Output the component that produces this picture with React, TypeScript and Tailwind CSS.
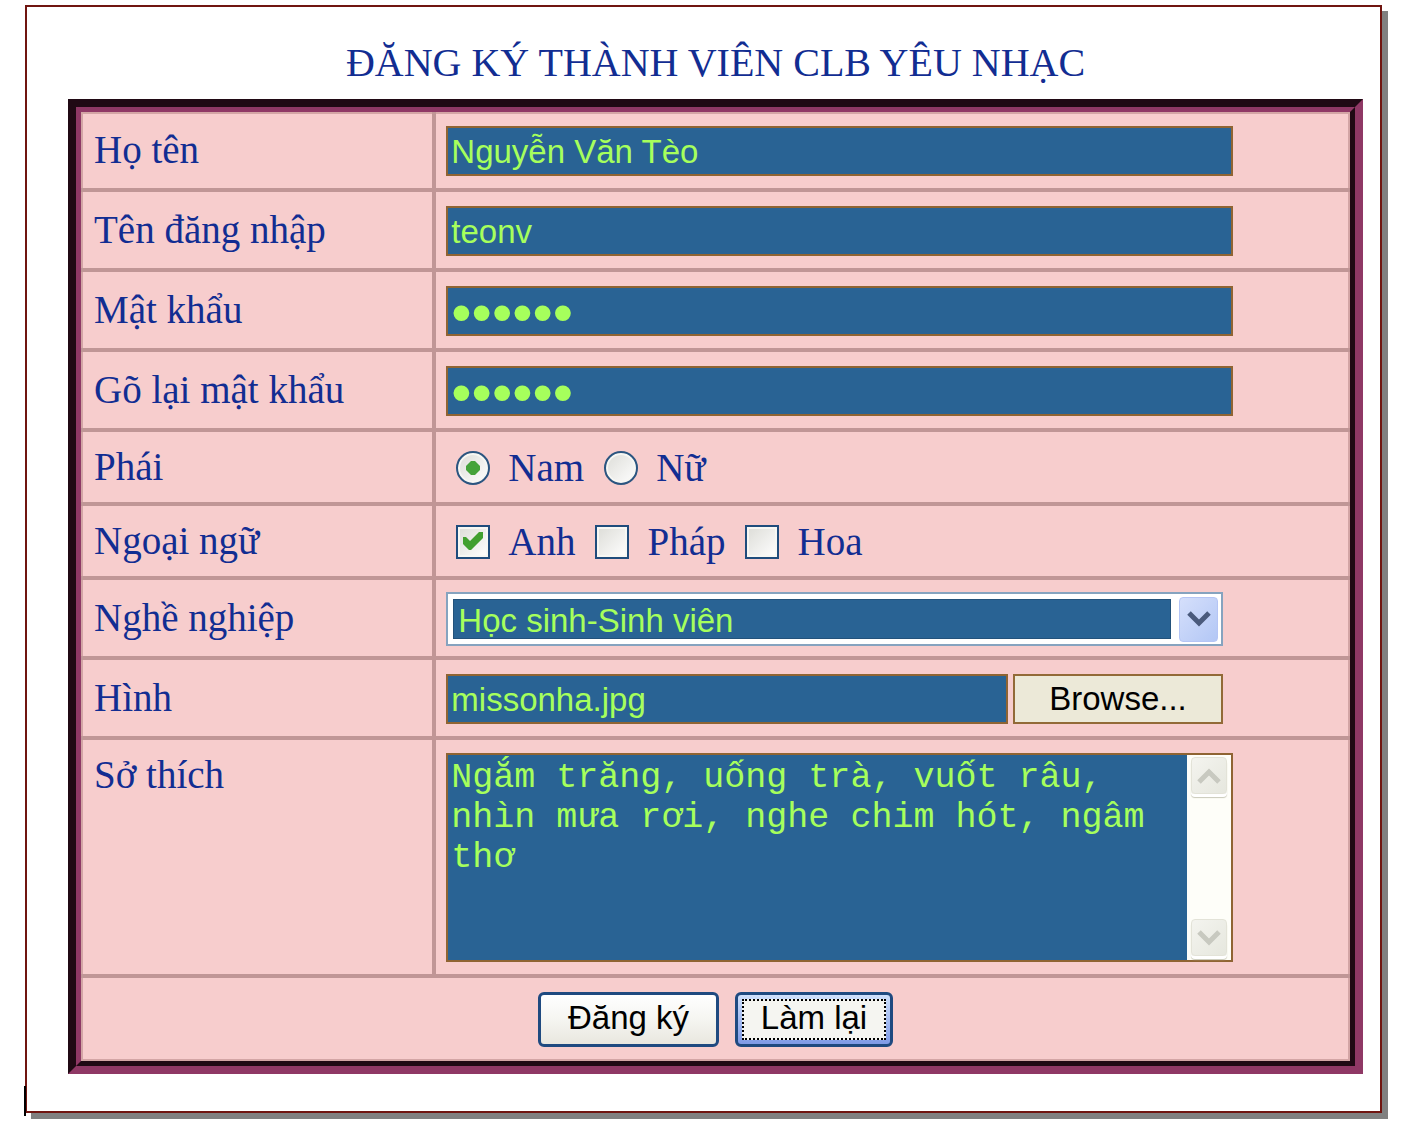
import type { InputHTMLAttributes, ReactNode } from "react";

const box = "block w-full h-[50px] border-2 border-[#8f6433] bg-[#296394] px-[3px] font-['Liberation_Sans',sans-serif] text-[#a6ff5c] outline-none";
const field = `${box} pt-[2px] text-[33px] leading-[44px]`;
const secret = `${box} text-[58px] leading-[46px]`;

function Row({ label, htmlFor, height, tight, children }: { label: string; htmlFor?: string; height: string; tight?: boolean; children: ReactNode }) {
  return (
    <tr className={height}>
      <th
        scope="row"
        className={`${tight ? "pt-[12px]" : "pt-[15px]"} border-r-4 border-b-4 border-[#c09696] pl-[13px] text-left align-top font-normal`}
      >
        {htmlFor ? (
          <label htmlFor={htmlFor} className="block leading-[46px]">
            {label}
          </label>
        ) : (
          <span className="block leading-[46px]">{label}</span>
        )}
      </th>
      <td className="border-b-4 border-[#c09696] py-0 pr-[117px] pl-[10px] align-top">{children}</td>
    </tr>
  );
}

function Choice({ label, ...props }: { label: string } & InputHTMLAttributes<HTMLInputElement>) {
  const round = props.type === "radio";
  return (
    <label className="flex items-center gap-[18px] leading-[46px]">
      <span className="relative block size-[34px]">
        <input
          {...props}
          className={
            round
              ? "peer block size-[34px] appearance-none rounded-full border-2 border-[#2b5580] bg-linear-to-br from-[#dcdcd7] to-white shadow-[inset_0_0_0_2px_#f7f7f3]"
              : "peer block size-[34px] appearance-none border-2 border-[#1f4c7c] bg-linear-to-br from-[#dcdcd7] to-white shadow-[inset_0_0_0_2px_#f7f7f3]"
          }
        />
        <svg viewBox="0 0 34 34" className="pointer-events-none invisible absolute inset-0 size-full peer-checked:visible" aria-hidden="true">
          {round ? (
            <path d="M15 10h4l5 5v4l-5 5h-4l-5-5v-4z" fill="#45a33a" />
          ) : (
            <path d="M7 12H10L14 16L23 7H27V13L15 25H13L7 19Z" fill="#41a02f" />
          )}
        </svg>
      </span>
      {label}
    </label>
  );
}

function Chevron({ up, color }: { up?: boolean; color: string }) {
  return (
    <svg viewBox="0 0 24 16" className="h-4 w-6" fill="none" stroke={color} strokeWidth="5" aria-hidden="true">
      <path d={up ? "M2 14L12 4L22 14" : "M2 2L12 12L22 2"} />
    </svg>
  );
}

const scrollButton =
  "flex h-[37px] w-[36px] items-center justify-center rounded-[4px] border border-[#e3e3d8] bg-linear-to-br from-[#f4f4ef] to-[#e6e7de] shadow-[0_3px_0_#fff,0_4px_1px_#c9c9b8]";
const command =
  "flex h-[55px] items-center justify-center rounded-[6px] border-[3px] border-[#1f4a80] text-[33px] font-['Liberation_Sans',sans-serif] text-black";

export default function App() {
  return (
    <main className="min-h-screen bg-white pt-[5px] pr-[22px] pb-[25px] pl-[25px] font-['Liberation_Serif',serif] text-[39px] text-[#122d92]">
      <form
        className="relative border-2 border-[#701510] bg-white pt-[33px] pr-[17px] pb-[37px] pl-[41px] shadow-[6px_6px_0_#808080]"
        onSubmit={(e) => e.preventDefault()}
      >
        <span className="absolute -bottom-[5px] -left-[3px] h-[30px] w-[2px] bg-black" aria-hidden="true" />
        <h1 className="pb-[13px] text-center text-[40px] leading-[46px]">ĐĂNG KÝ THÀNH VIÊN CLB YÊU NHẠC</h1>

        <div className="border-8 border-t-[#200914] border-r-[#8f3865] border-b-[#8f3865] border-l-[#200914]">
          <div className="border-[5px] border-t-[#8f3865] border-r-[#200914] border-b-[#200914] border-l-[#8f3865] bg-[#f7cdcd]">
            <table className="w-full table-fixed border-separate border-spacing-0 shadow-[inset_0_0_0_2px_#d3a5a5]">
              <colgroup>
                <col className="w-[28%]" />
                <col />
              </colgroup>
              <tbody>
                <Row label="Họ tên" htmlFor="name" height="h-20">
                  <input id="name" className={`${field} mt-[14px]`} defaultValue="Nguyễn Văn Tèo" />
                </Row>
                <Row label="Tên đăng nhập" htmlFor="user" height="h-20">
                  <input id="user" className={`${field} mt-[14px]`} defaultValue="teonv" />
                </Row>
                <Row label="Mật khẩu" htmlFor="pass" height="h-20">
                  <input id="pass" type="password" className={`${secret} mt-[14px]`} defaultValue="teo123" />
                </Row>
                <Row label="Gõ lại mật khẩu" htmlFor="pass2" height="h-20">
                  <input id="pass2" type="password" className={`${secret} mt-[14px]`} defaultValue="teo123" />
                </Row>
                <Row label="Phái" height="h-[74px]" tight>
                  <div className="flex gap-5 pt-[13px] pl-[10px]">
                    <Choice type="radio" name="gender" label="Nam" defaultChecked />
                    <Choice type="radio" name="gender" label="Nữ" />
                  </div>
                </Row>
                <Row label="Ngoại ngữ" height="h-[74px]" tight>
                  <div className="flex gap-5 pt-[13px] pl-[10px]">
                    <Choice type="checkbox" name="lang" label="Anh" defaultChecked />
                    <Choice type="checkbox" name="lang" label="Pháp" />
                    <Choice type="checkbox" name="lang" label="Hoa" />
                  </div>
                </Row>
                <Row label="Nghề nghiệp" htmlFor="job" height="h-20">
                  <div className="relative mt-[12px] mr-[10px] flex h-[54px] items-center gap-[8px] border-2 border-[#86a3bf] bg-white pr-[3px] pl-[5px]">
                    <select
                      id="job"
                      className="h-10 flex-1 appearance-none border border-[#23527b] bg-[#296394] px-[4px] pt-[2px] font-['Liberation_Sans',sans-serif] text-[33px] leading-[38px] text-[#a6ff5c] outline-none"
                    >
                      <option>Học sinh-Sinh viên</option>
                    </select>
                    <span className="pointer-events-none flex h-[45px] w-[39px] items-center justify-center rounded-[4px] border border-[#b5c5f5] bg-linear-to-br from-[#d5dffb] to-[#b3c7f5]">
                      <Chevron color="#4a5a7c" />
                    </span>
                  </div>
                </Row>
                <Row label="Hình" htmlFor="photo" height="h-20">
                  <div className="mt-[14px] mr-[10px] flex gap-[5px]">
                    <input id="photo" className={`${field} min-w-0 flex-1`} defaultValue="missonha.jpg" />
                    <button
                      type="button"
                      className="h-[50px] w-[210px] border-2 border-[#926a37] bg-[#ece9d8] font-['Liberation_Sans',sans-serif] text-[33px] leading-[46px] text-black"
                    >
                      Browse...
                    </button>
                  </div>
                </Row>
                <Row label="Sở thích" htmlFor="hobby" height="h-[238px]" tight>
                  <div className="mt-[13px] flex h-[209px] border-2 border-[#8f6433] bg-[#296394]">
                    <textarea
                      id="hobby"
                      className="min-w-0 flex-1 resize-none overflow-hidden px-[3px] py-[3px] font-['Liberation_Mono',monospace] text-[35px] leading-[40px] text-[#a6ff5c] outline-none"
                      defaultValue="Ngắm trăng, uống trà, vuốt râu, nhìn mưa rơi, nghe chim hót, ngâm thơ"
                    />
                    <div className="flex w-[44px] flex-col items-center justify-between bg-[#fefef9] pt-[2px] pb-[4px]">
                      <button type="button" aria-label="Cuộn lên" className={scrollButton}>
                        <Chevron up color="#c8c9c0" />
                      </button>
                      <button type="button" aria-label="Cuộn xuống" className={scrollButton}>
                        <Chevron color="#c8c9c0" />
                      </button>
                    </div>
                  </div>
                </Row>
                <tr className="h-[83px]">
                  <td colSpan={2} className="pt-[14px] align-top">
                    <div className="flex justify-center gap-[16px]">
                      <button type="submit" className={`${command} w-[181px] bg-linear-to-b from-white via-[#f5f5f1] to-[#e9e7df] pb-[4px]`}>
                        Đăng ký
                      </button>
                      <button type="reset" className={`${command} w-[158px] bg-linear-to-b from-[#cfe0fb] to-[#7f9ae6] p-[4px]`}>
                        <span className="flex h-full w-full items-center justify-center border-2 border-dotted border-black bg-[#f5f5f1] pb-[4px]">
                          Làm lại
                        </span>
                      </button>
                    </div>
                  </td>
                </tr>
              </tbody>
            </table>
          </div>
        </div>
      </form>
    </main>
  );
}
